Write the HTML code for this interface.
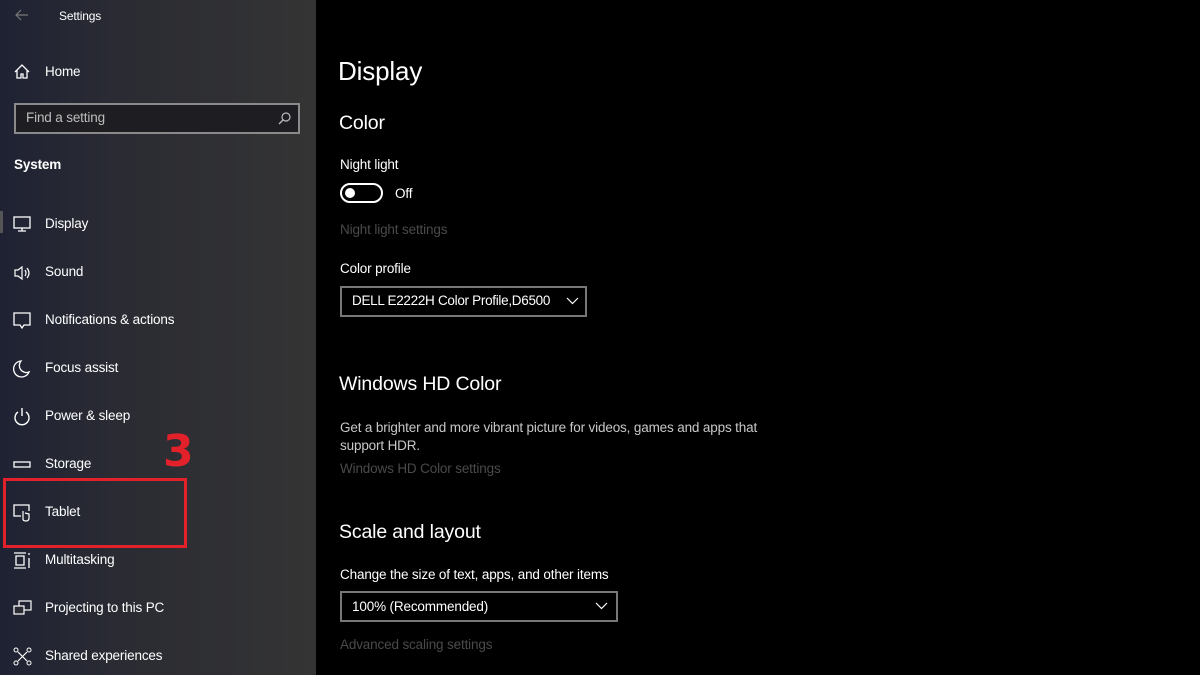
<!DOCTYPE html>
<html><head><meta charset="utf-8"><style>
*{margin:0;padding:0;box-sizing:border-box}
body{width:1200px;height:675px;overflow:hidden;background:#000;font-family:"Segoe UI","Liberation Sans",sans-serif;color:#fff;position:relative;letter-spacing:-0.15px}
.side{position:absolute;left:0;top:0;width:316px;height:675px;background:linear-gradient(90deg,#1f2233 0%,#2b2c33 40%,#343434 100%)}
.t{position:absolute;white-space:nowrap}
.nav{position:absolute;left:45px;font-size:13.5px;color:#fff;margin-top:1px}
.ic{position:absolute;left:13px;width:20px;height:20px}
.m{font-size:13.5px}
.gray{color:#4a4a4a;font-size:13.5px}
</style></head><body>
<div class="side">
  <svg class="ic" style="left:14px;top:7px;width:16px;height:16px" viewBox="0 0 16 16"><path d="M14 8H2M7 3L2 8l5 5" stroke="#777" fill="none" stroke-width="1.2"/></svg>
  <div class="t" style="left:59px;top:9px;font-size:12px">Settings</div>
  <svg class="ic" style="top:63px;width:18px;height:18px" viewBox="0 0 18 18"><path d="M2 9L9 2l7 7M4 7v8h4v-4h2v4h4V7" stroke="#fff" fill="none" stroke-width="1.3"/></svg>
  <div class="nav" style="top:63px">Home</div>
  <div style="position:absolute;left:14px;top:103px;width:286px;height:31px;border:2px solid #8a8a8a;background:#1e1e22"></div>
  <div class="t" style="left:26px;top:110px;font-size:13.5px;color:#bdbdbd">Find a setting</div>
  <svg class="ic" style="left:277px;top:111px;width:15px;height:15px" viewBox="0 0 15 15"><circle cx="9" cy="6" r="4" stroke="#bbb" fill="none" stroke-width="1.2"/><path d="M6 9l-4 4" stroke="#bbb" stroke-width="1.3"/></svg>
  <div class="t" style="left:14px;top:157px;font-size:13.5px;font-weight:bold">System</div>
  <div style="position:absolute;left:0;top:211px;width:3px;height:22px;background:#555"></div>

  <svg class="ic" style="top:215px" viewBox="0 0 20 20"><rect x="1" y="2" width="16" height="11" stroke="#fff" fill="none" stroke-width="1.3"/><path d="M9 13v3M5 16h8" stroke="#fff" stroke-width="1.3"/></svg>
  <div class="nav" style="top:215px">Display</div>
  <svg class="ic" style="top:263px" viewBox="0 0 20 20"><path d="M2 7h3l4-3v12l-4-3H2z" stroke="#fff" fill="none" stroke-width="1.2"/><path d="M12 7q2 3 0 6M14 5q4 5 0 10" stroke="#fff" fill="none" stroke-width="1.2"/></svg>
  <div class="nav" style="top:263px">Sound</div>
  <svg class="ic" style="top:311px" viewBox="0 0 20 20"><path d="M1 2h16v12h-6l-2 3-2-3H1z" stroke="#fff" fill="none" stroke-width="1.3"/></svg>
  <div class="nav" style="top:311px">Notifications &amp; actions</div>
  <svg class="ic" style="top:359px" viewBox="0 0 20 20"><path d="M8 2a8 8 0 1 0 8 11A7 7 0 0 1 8 2z" stroke="#fff" fill="none" stroke-width="1.3"/></svg>
  <div class="nav" style="top:359px">Focus assist</div>
  <svg class="ic" style="top:407px" viewBox="0 0 20 20"><path d="M5 5a7 7 0 1 0 8 0M9 1v8" stroke="#fff" fill="none" stroke-width="1.4"/></svg>
  <div class="nav" style="top:407px">Power &amp; sleep</div>
  <svg class="ic" style="top:455px" viewBox="0 0 20 20"><rect x="1" y="7" width="16" height="5" stroke="#fff" fill="none" stroke-width="1.3"/></svg>
  <div class="nav" style="top:455px">Storage</div>
  <svg class="ic" style="top:503px" viewBox="0 0 20 20"><path d="M8 13H1V2h15v6" stroke="#fff" fill="none" stroke-width="1.3"/><path d="M10 8v8q0 2 3 2t3-3v-4l-4-1" stroke="#fff" fill="none" stroke-width="1.2"/></svg>
  <div class="nav" style="top:503px">Tablet</div>
  <svg class="ic" style="top:551px" viewBox="0 0 20 20"><path d="M1 2h12M1 17h12M3 5h8v9H3zM16 2v2M16 7v10" stroke="#fff" fill="none" stroke-width="1.3"/></svg>
  <div class="nav" style="top:551px">Multitasking</div>
  <svg class="ic" style="top:599px" viewBox="0 0 20 20"><rect x="6" y="2" width="12" height="9" stroke="#fff" fill="none" stroke-width="1.2"/><rect x="1" y="7" width="10" height="8" stroke="#fff" fill="#2a2b33" stroke-width="1.2"/></svg>
  <div class="nav" style="top:599px">Projecting to this PC</div>
  <svg class="ic" style="top:647px" viewBox="0 0 20 20"><circle cx="3" cy="3" r="2" stroke="#fff" fill="none"/><circle cx="16" cy="3" r="2" stroke="#fff" fill="none"/><circle cx="3" cy="16" r="2" stroke="#fff" fill="none"/><circle cx="16" cy="16" r="2" stroke="#fff" fill="none"/><path d="M5 5l9 9M14 5l-9 9" stroke="#fff" stroke-width="1.2"/></svg>
  <div class="nav" style="top:647px">Shared experiences</div>

  <div style="position:absolute;left:3px;top:478px;width:184px;height:70px;border:3px solid #e3212b"></div>
  <div class="t" style="left:163px;top:430px;font-size:44px;font-weight:bold;color:#e3212b;line-height:1;font-family:'DejaVu Sans',sans-serif">3</div>
</div>

<div class="t" style="left:338px;top:56px;font-size:26px;font-weight:300">Display</div>
<div class="t" style="left:339px;top:112px;font-size:19.5px">Color</div>
<div class="t m" style="left:340px;top:157px">Night light</div>
<div style="position:absolute;left:340px;top:183px;width:43px;height:20px;border:2px solid #fff;border-radius:10px"></div>
<div style="position:absolute;left:345px;top:188px;width:10px;height:10px;border-radius:50%;background:#fff"></div>
<div class="t m" style="left:395px;top:186px">Off</div>
<div class="t gray" style="left:340px;top:222px">Night light settings</div>
<div class="t m" style="left:340px;top:261px">Color profile</div>
<div style="position:absolute;left:340px;top:286px;width:247px;height:31px;border:2px solid #777"></div>
<div class="t m" style="left:352px;top:293px;letter-spacing:-0.3px">DELL E2222H Color Profile,D6500</div>
<svg style="position:absolute;left:566px;top:297px" width="13" height="8" viewBox="0 0 13 8"><path d="M1 1l5.5 5.5L12 1" stroke="#fff" fill="none" stroke-width="1.2"/></svg>

<div class="t" style="left:339px;top:373px;font-size:19.5px">Windows HD Color</div>
<div class="t" style="left:340px;top:419px;font-size:13.5px;color:#c8c8c8;line-height:18px">Get a brighter and more vibrant picture for videos, games and apps that<br>support HDR.</div>
<div class="t gray" style="left:340px;top:461px">Windows HD Color settings</div>

<div class="t" style="left:339px;top:521px;font-size:19.5px">Scale and layout</div>
<div class="t m" style="left:340px;top:567px">Change the size of text, apps, and other items</div>
<div style="position:absolute;left:340px;top:591px;width:278px;height:31px;border:2px solid #777"></div>
<div class="t m" style="left:352px;top:599px">100% (Recommended)</div>
<svg style="position:absolute;left:595px;top:602px" width="13" height="8" viewBox="0 0 13 8"><path d="M1 1l5.5 5.5L12 1" stroke="#fff" fill="none" stroke-width="1.2"/></svg>
<div class="t gray" style="left:340px;top:637px">Advanced scaling settings</div>
</body></html>
